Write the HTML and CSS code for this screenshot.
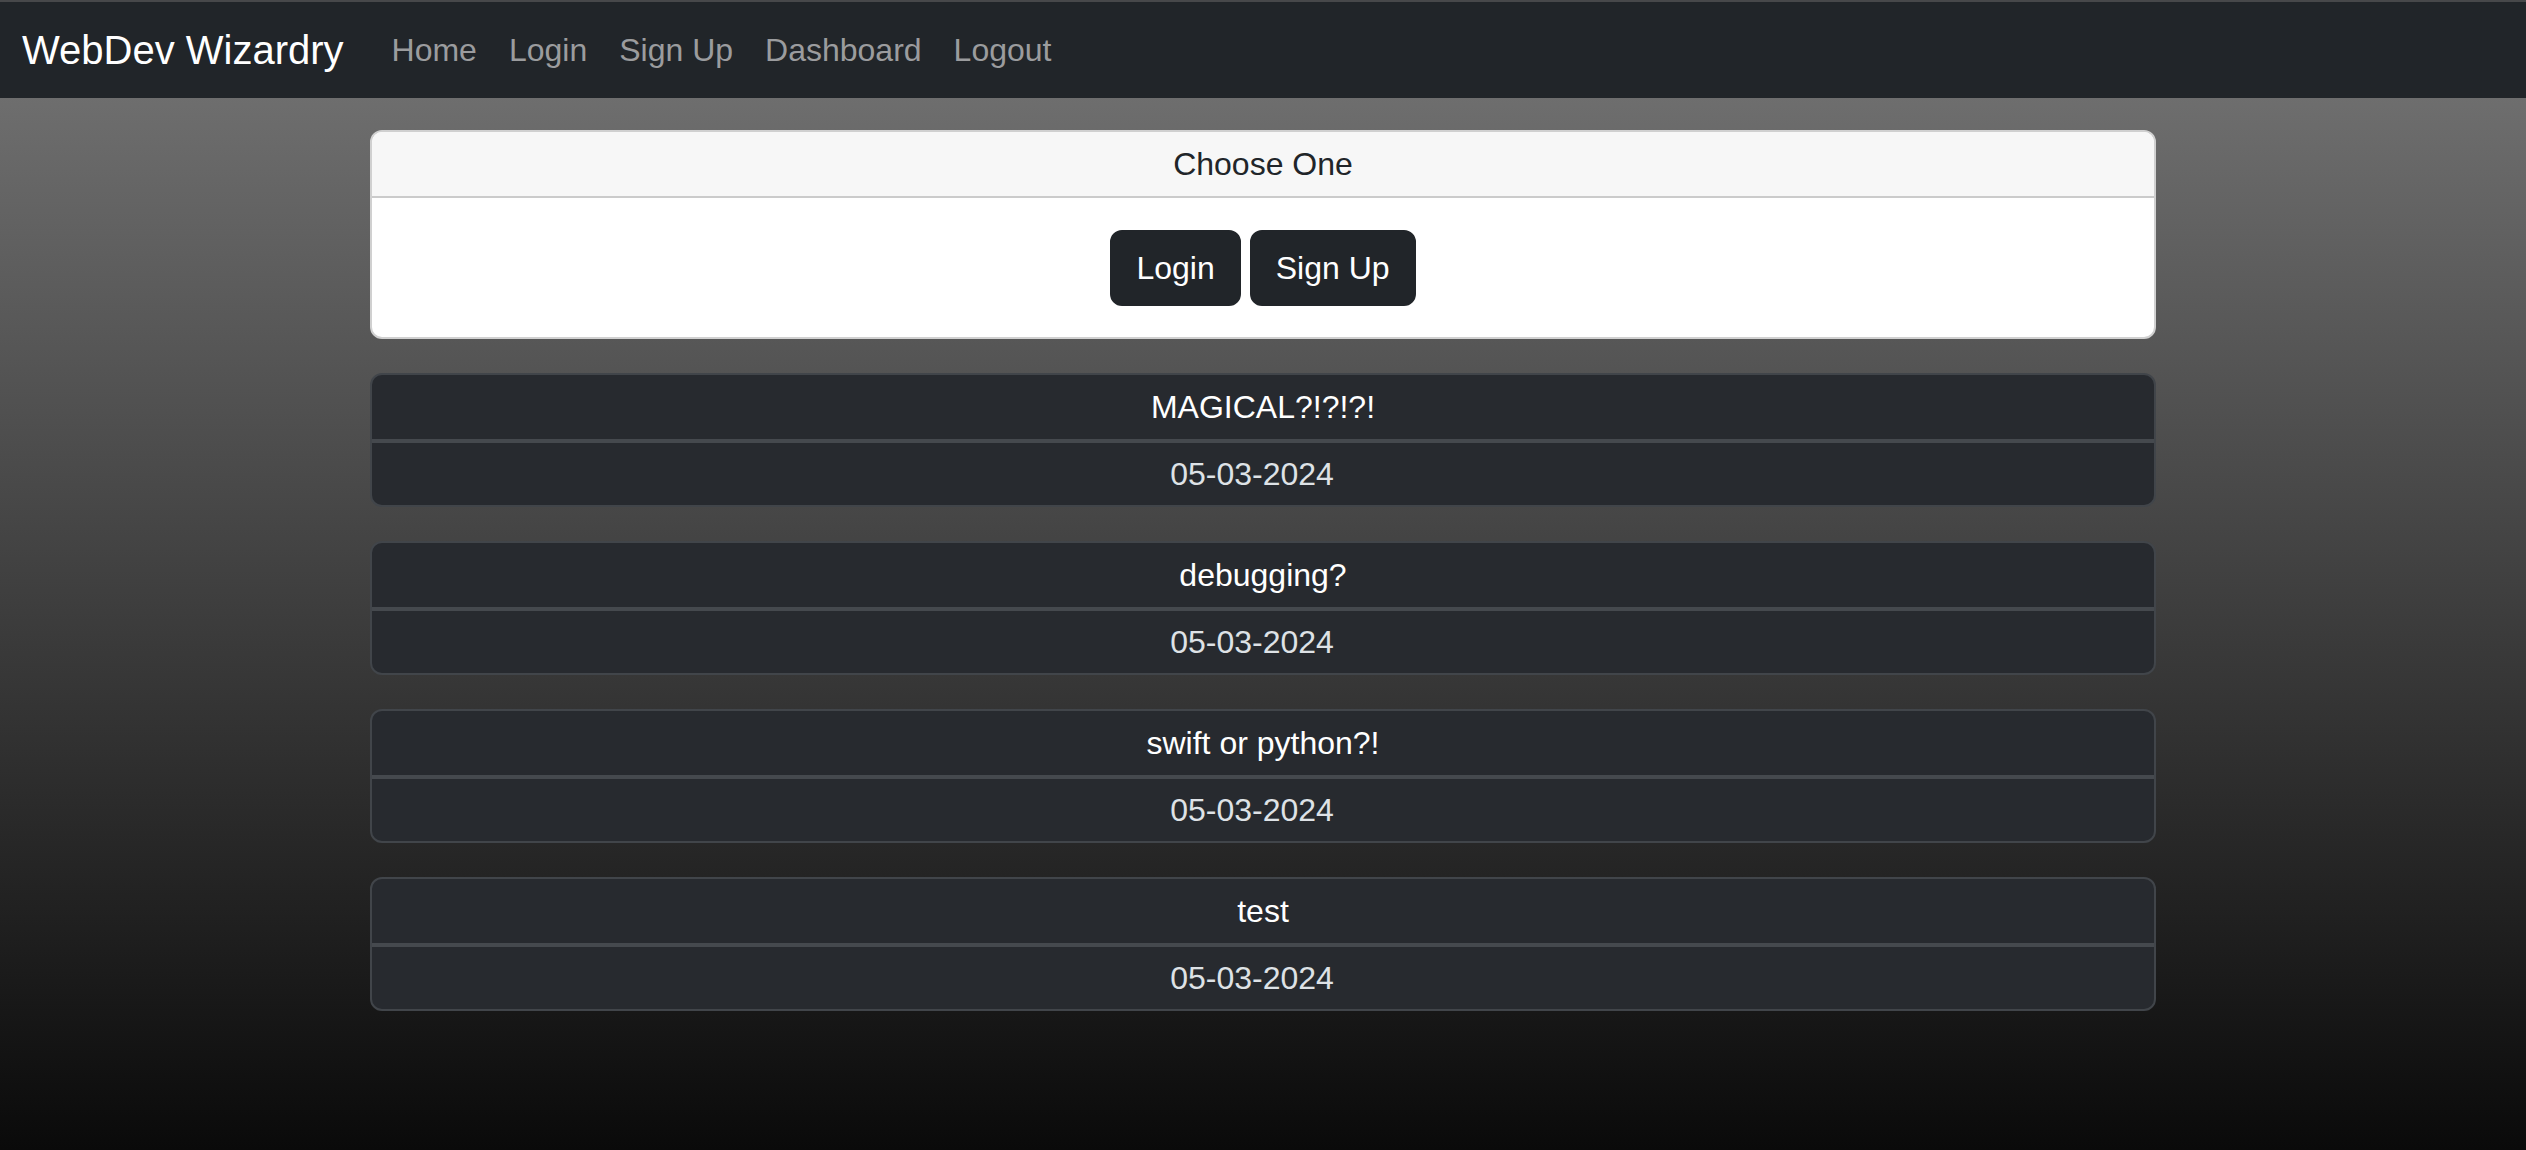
FILE: index.html
```html
<!DOCTYPE html>
<html lang="en">
<head>
<meta charset="utf-8">
<title>WebDev Wizardry</title>
<link rel="stylesheet" href="styles.css">
</head>
<body>
<div class="topline"></div>
<nav class="navbar">
  <a class="brand" href="#">WebDev Wizardry</a>
  <ul class="nav-links">
    <li><a href="#">Home</a></li>
    <li><a href="#">Login</a></li>
    <li><a href="#">Sign Up</a></li>
    <li><a href="#">Dashboard</a></li>
    <li><a href="#">Logout</a></li>
  </ul>
</nav>
<main class="content">
  <section class="choose-card">
    <div class="choose-header">Choose One</div>
    <div class="choose-body">
      <a class="btn" href="#">Login</a>
      <a class="btn" href="#">Sign Up</a>
    </div>
  </section>
  <section class="post-card">
    <div class="post-title">MAGICAL?!?!?!</div>
    <div class="post-date">05-03-2024</div>
  </section>
  <section class="post-card">
    <div class="post-title">debugging?</div>
    <div class="post-date">05-03-2024</div>
  </section>
  <section class="post-card">
    <div class="post-title">swift or python?!</div>
    <div class="post-date">05-03-2024</div>
  </section>
  <section class="post-card">
    <div class="post-title">test</div>
    <div class="post-date">05-03-2024</div>
  </section>
</main>
</body>
</html>
```
FILE: styles.css
```css
html, body {
  margin: 0;
  padding: 0;
}
body {
  min-height: 100vh;
  font-family: "Liberation Sans", Arial, sans-serif;
  background: linear-gradient(to bottom, #777777 0%, #0a0a0a 100%);
  background-attachment: fixed;
}
.topline {
  height: 2px;
  background: #47484a;
}
.navbar {
  height: 96px;
  background: #212529;
  display: flex;
  align-items: center;
  padding-left: 22px;
}
.brand {
  font-size: 40px;
  color: #ffffff;
  text-decoration: none;
  margin-right: 32px;
}
.nav-links {
  list-style: none;
  margin: 0;
  padding: 0;
  display: flex;
}
.nav-links a {
  display: block;
  padding: 0 16px;
  font-size: 32px;
  color: #9b9c9e;
  text-decoration: none;
}
.content {
  width: 1786px;
  margin: 32px auto 0;
  display: flex;
  flex-direction: column;
  gap: 34px;
}
.choose-card {
  background: #ffffff;
  border: 2px solid #d0d0d0;
  border-radius: 12px;
  overflow: hidden;
}
.choose-header {
  height: 64px;
  line-height: 64px;
  text-align: center;
  font-size: 32px;
  color: #212529;
  background: #f7f7f7;
  border-bottom: 2px solid #cbcbcb;
}
.choose-body {
  display: flex;
  justify-content: center;
  gap: 9px;
  padding: 32px 0 31px;
}
.btn {
  display: block;
  height: 72px;
  line-height: 72px;
  padding: 0 24px;
  border: 2px solid #212529;
  border-radius: 12px;
  background: #212529;
  color: #ffffff;
  font-size: 32px;
  text-decoration: none;
}
.post-card {
  background: #272a2f;
  border: 2px solid #41454a;
  border-radius: 12px;
  overflow: hidden;
  text-align: center;
  font-size: 32px;
}
.post-title {
  height: 64px;
  line-height: 64px;
  color: #ffffff;
  border-bottom: 4px solid #45494e;
}
.post-date {
  height: 62px;
  line-height: 62px;
  color: #dee2e6;
  padding-right: 22px;
}
```
